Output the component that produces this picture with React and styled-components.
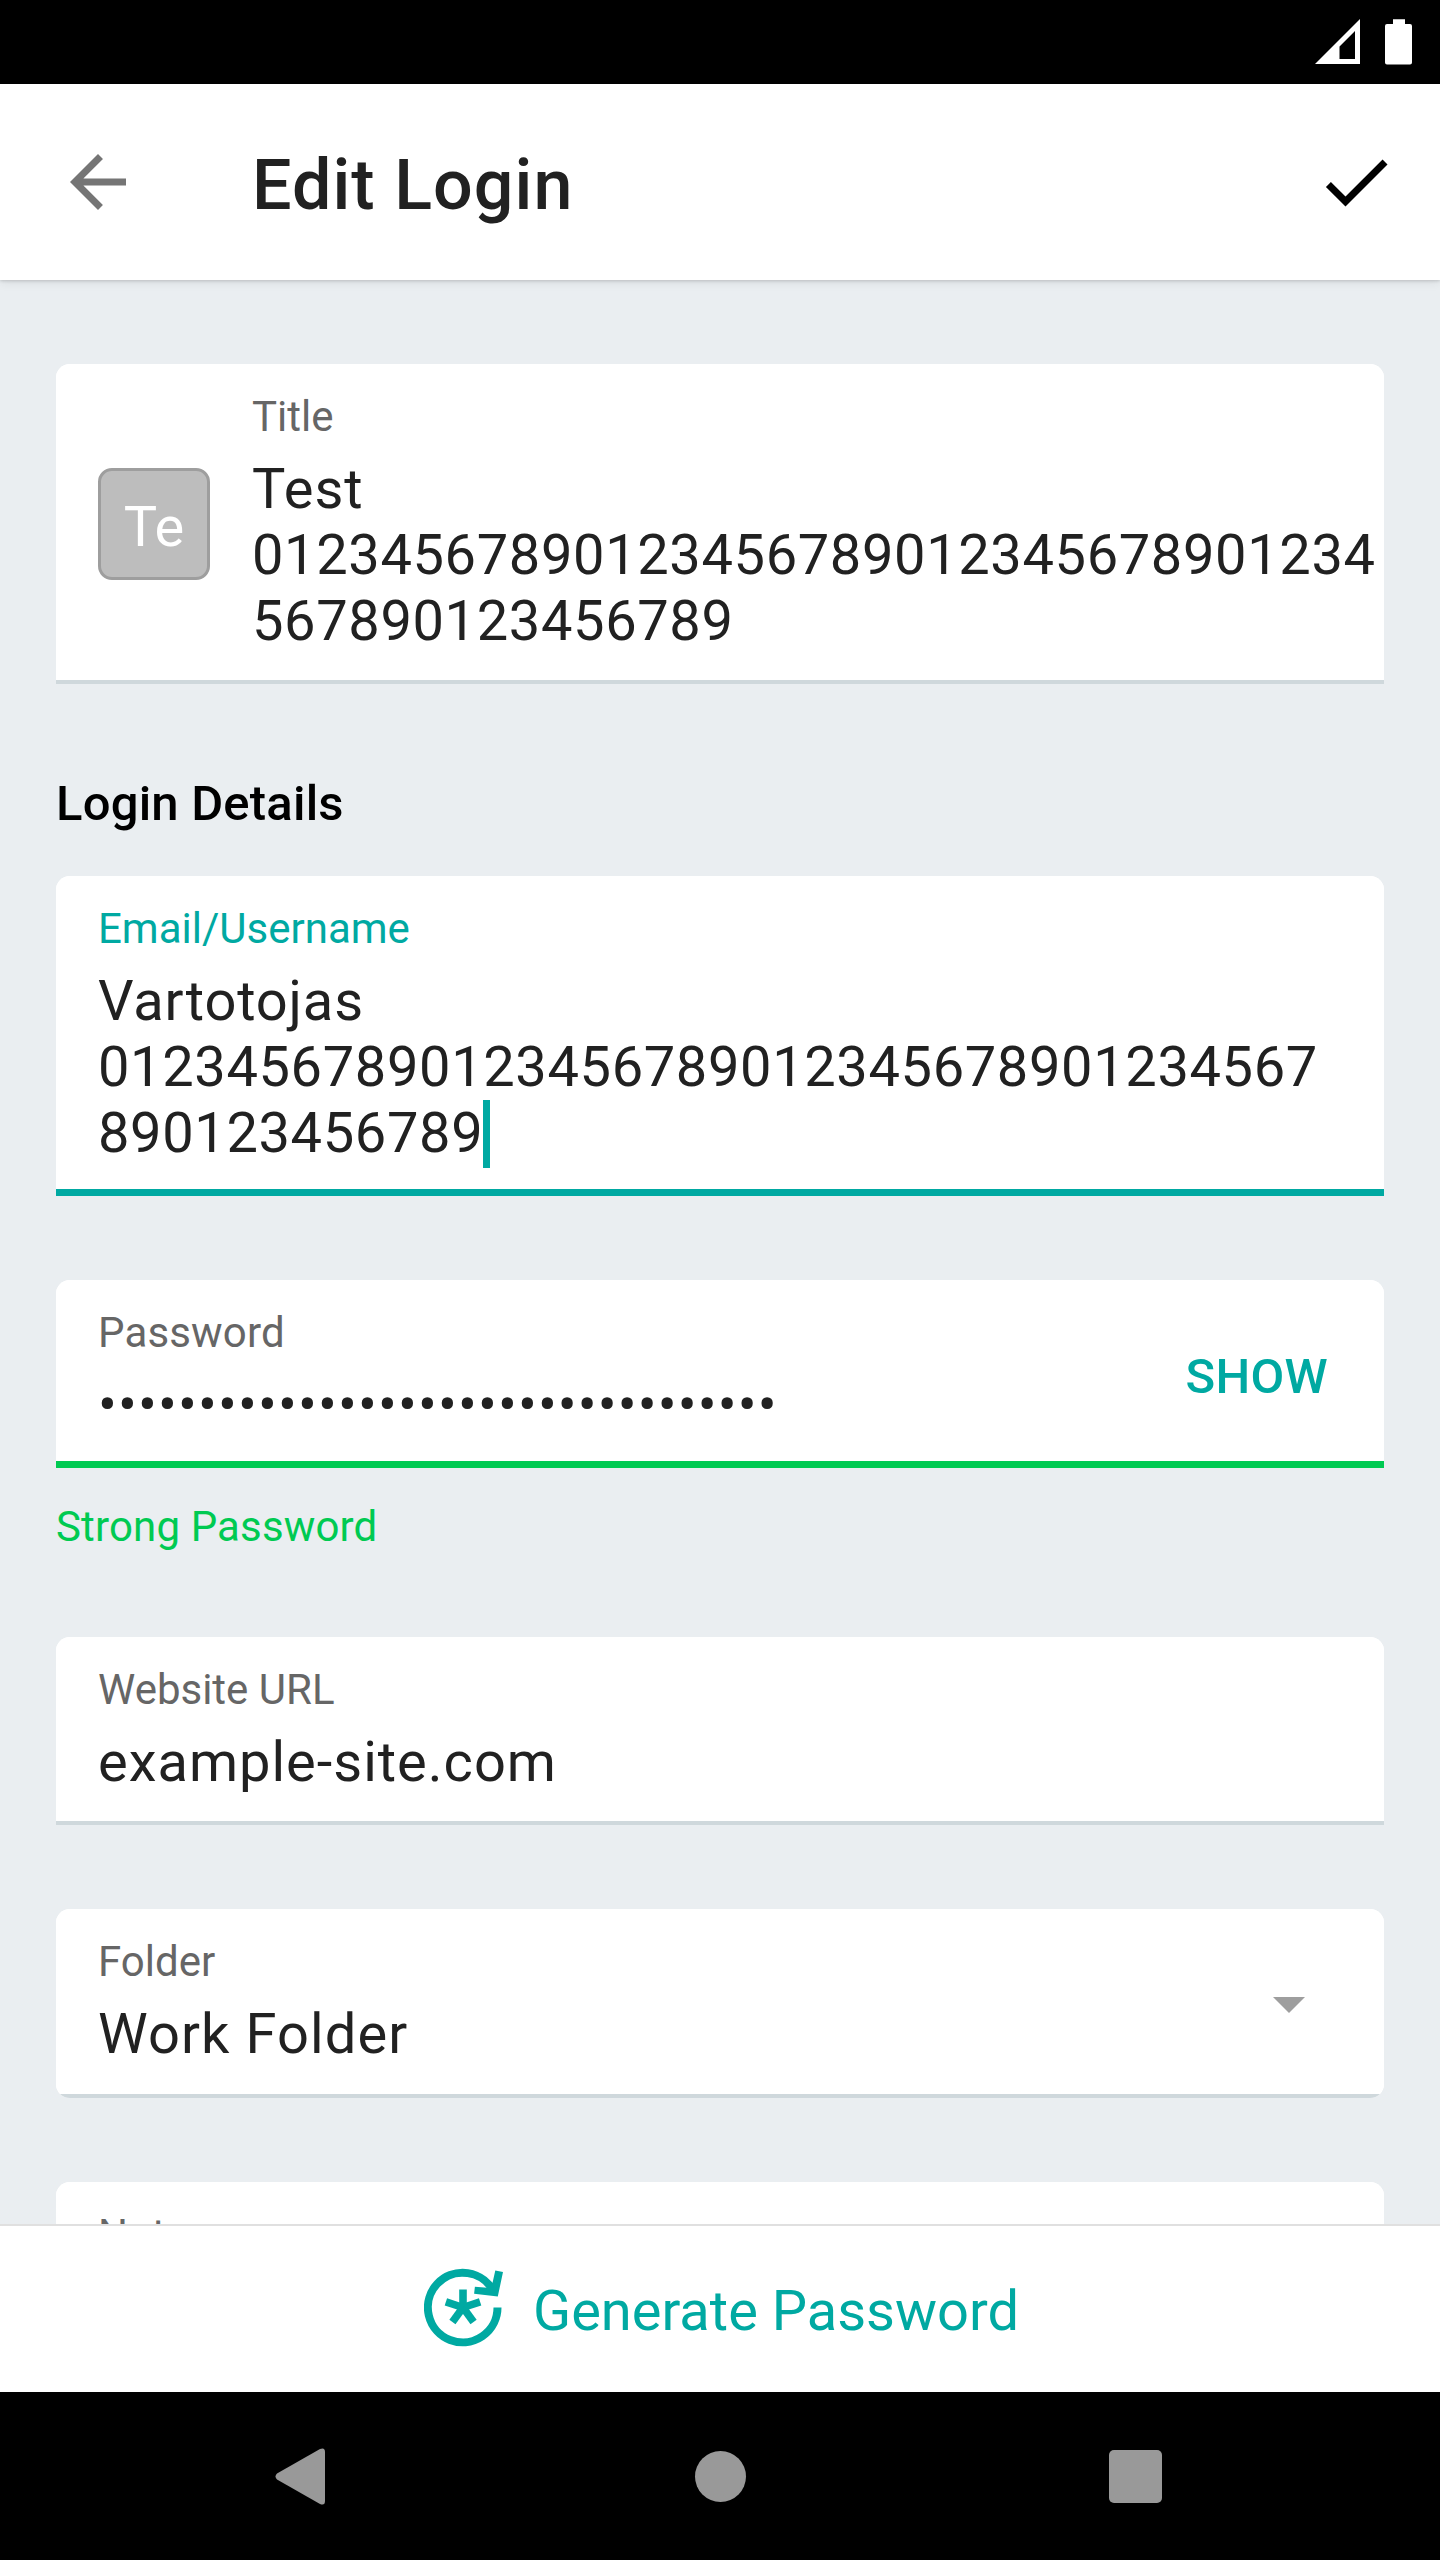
import React from "react";
import styled, { createGlobalStyle } from "styled-components";

const teal = "#00a9a2";
const green = "#00ca52";

const GlobalStyle = createGlobalStyle`
  *, *::before, *::after { box-sizing: border-box; }
  html, body { margin: 0; padding: 0; background: #000; }
  body { font-family: Roboto, "Liberation Sans", sans-serif; }
  svg { display: block; flex: none; }
`;

const Screen = styled.div`
  width: 1440px;
  height: 2560px;
  display: flex;
  flex-direction: column;
  overflow: hidden;
  background: #eaeef1;
`;

const StatusBar = styled.div`
  flex: none;
  height: 84px;
  padding: 19px 28px 0 0;
  display: flex;
  justify-content: flex-end;
  gap: 25px;
  background: #000;
`;

const AppBar = styled.header`
  flex: none;
  height: 196px;
  padding: 0 42px 0 56px;
  display: flex;
  align-items: center;
  background: #fff;
  box-shadow: 0 1px 3px rgba(0, 0, 0, 0.16), 0 3px 10px rgba(0, 0, 0, 0.07);
  z-index: 1;
`;

const ScreenTitle = styled.h1`
  flex: 1;
  margin: 6px 0 0 112px;
  font-size: 70px;
  line-height: 82px;
  font-weight: 500;
  letter-spacing: 1.05px;
  color: #212121;
`;

const Form = styled.main`
  flex: 1;
  min-height: 0;
  overflow: hidden;
  padding: 84px 56px 0;
  display: flex;
  flex-direction: column;
`;

const SectionTitle = styled.h2`
  flex: none;
  margin: 91px 0 43px;
  font-size: 49px;
  line-height: 58px;
  font-weight: 500;
  letter-spacing: 0.2px;
  color: #000;
`;

const Card = styled.section`
  flex: none;
  height: ${(p) => p.$height || 188}px;
  margin-top: ${(p) => p.$gap || 0}px;
  display: flex;
  flex-direction: column;
  background: #fff;
  border-radius: ${(p) => (p.$clipped ? "14px" : "14px 14px 0 0")};
  overflow: hidden;
`;

const CardBody = styled.div`
  flex: 1;
  min-height: 0;
  display: flex;
  padding-left: 42px;
  background: #fff;
`;

const Underline = styled.div`
  flex: none;
  height: ${(p) => p.$size || 4}px;
  background: ${(p) => p.$color || "#cfd8dc"};
`;

const FieldText = styled.div`
  flex: 1;
  padding-top: 28px;
`;

const Label = styled.div`
  font-size: 42px;
  line-height: 49px;
  letter-spacing: ${(p) => p.$spacing || 0}px;
  color: ${(p) => p.$color || "#666"};
`;

const Value = styled.div`
  margin-top: 15px;
  font-size: 56px;
  line-height: 66px;
  letter-spacing: ${(p) => p.$spacing || 1}px;
  white-space: pre;
  color: #212121;
`;

const Digits = styled.span`
  letter-spacing: 0.63px;
`;

const Caret = styled.span`
  display: inline-block;
  width: 7px;
  height: 68px;
  margin: 0 0 -2px 0;
  vertical-align: top;
  background: ${teal};
`;

const Avatar = styled.div`
  width: 112px;
  height: 112px;
  margin: 104px 42px 0 0;
  display: flex;
  align-items: center;
  justify-content: center;
  padding-top: 6px;
  border: 3px solid #9e9e9e;
  border-radius: 14px;
  background: #bdbdbd;
  color: #fff;
  font-size: 56px;
  line-height: 66px;
`;

const ShowButton = styled.button`
  align-self: flex-start;
  margin: 68px 56px 0 0;
  padding: 0;
  border: 0;
  background: none;
  font: 500 49px/58px Roboto, "Liberation Sans", sans-serif;
  letter-spacing: 0.3px;
  color: ${teal};
`;

const DropdownIcon = styled.svg`
  margin: 88px 79px 0 0;
`;

const Strength = styled.div`
  flex: none;
  margin-top: 34px;
  font-size: 42px;
  line-height: 49px;
  letter-spacing: 0.15px;
  color: ${green};
`;

const Footer = styled.footer`
  flex: none;
  height: 168px;
  padding-left: 424px;
  display: flex;
  align-items: center;
  gap: 28px;
  border-top: 2px solid #e0e0e0;
  background: #fff;

  svg {
    margin-bottom: 1px;
  }
`;

const GenerateText = styled.span`
  padding-top: 4px;
  font-size: 56px;
  line-height: 66px;
  color: ${teal};
`;

const NavBar = styled.nav`
  flex: none;
  height: 168px;
  padding: 0 278px 0 275px;
  display: flex;
  align-items: center;
  justify-content: space-between;
  background: #000;
`;

const HomeDot = styled.div`
  width: 51px;
  height: 51px;
  margin-left: 5px;
  border-radius: 50%;
  background: #999;
`;

const RecentsSquare = styled.div`
  width: 53px;
  height: 53px;
  border-radius: 5px;
  background: #999;
`;

const SignalIcon = () => (
  <svg width="45" height="45" viewBox="0 0 45 45">
    <path fill="#fff" fillRule="evenodd" d="M45 0V45H0ZM40 12L24.500 27.500V40H40Z" />
  </svg>
);

const BatteryIcon = () => (
  <svg width="27" height="46" viewBox="0 0 27 46">
    <path fill="#fff" d="M8 0.300H20V5H25Q27 5 27 7V43.500Q27 45.500 25 45.500H2Q0 45.500 0 43.500V7Q0 5 2 5H8Z" />
  </svg>
);

const BackIcon = () => (
  <svg width="84" height="84" viewBox="0 0 24 24" fill="#757575">
    <path d="M20 11H7.830l5.590-5.590L12 4l-8 8 8 8 1.410-1.410L7.830 13H20v-2z" />
  </svg>
);

const CheckIcon = () => (
  <svg width="84" height="84" viewBox="0 0 24 24" fill="#000">
    <path d="M9 16.170L4.830 12l-1.420 1.410L9 19 21 7l-1.410-1.410z" />
  </svg>
);

const GenerateIcon = () => (
  <svg width="81" height="81" viewBox="0 0 81 81">
    <g fill="none" stroke={teal}>
      <path strokeWidth="8" d="M73.500 39.500A34.800 34.800 0 1 1 70 24.300" />
      <g strokeWidth="7.600">
        {[0, 72, 144, 216, 288].map((a) => (
          <path key={a} d="M39 39.500V21.500" transform={`rotate(${a} 39 39.500)`} />
        ))}
      </g>
    </g>
    <path fill={teal} d="M71.300 2.500L79 4.100L73.800 28.500L50.100 25.800L50.900 18.800L63.500 19.700L68.600 14.500Z" />
  </svg>
);

const Field = ({ label, labelColor, labelSpacing, children }) => (
  <FieldText>
    <Label $color={labelColor} $spacing={labelSpacing}>{label}</Label>
    {children}
  </FieldText>
);

export default function App() {
  return (
    <>
      <GlobalStyle />
      <Screen>
        <StatusBar>
          <SignalIcon />
          <BatteryIcon />
        </StatusBar>

        <AppBar>
          <BackIcon />
          <ScreenTitle>Edit Login</ScreenTitle>
          <CheckIcon />
        </AppBar>

        <Form>
          <Card $height={320}>
            <CardBody>
              <Avatar>Te</Avatar>
              <Field label="Title">
                <Value>
                  {"Test\n"}
                  <Digits>{"01234567890123456789012345678901234\n567890123456789"}</Digits>
                </Value>
              </Field>
            </CardBody>
            <Underline />
          </Card>

          <SectionTitle>Login Details</SectionTitle>

          <Card $height={320}>
            <CardBody>
              <Field label="Email/Username" labelColor={teal}>
                <Value $spacing={0.85}>
                  {"Vartotojas\n"}
                  <Digits>{"01234567890123456789012345678901234567\n890123456789"}</Digits>
                  <Caret />
                </Value>
              </Field>
            </CardBody>
            <Underline $size={7} $color={teal} />
          </Card>

          <Card $gap={84}>
            <CardBody>
              <Field label="Password" labelSpacing={0.15}>
                <Value $spacing={1.1}>{"•".repeat(34)}</Value>
              </Field>
              <ShowButton>SHOW</ShowButton>
            </CardBody>
            <Underline $size={7} $color={green} />
          </Card>
          <Strength>Strong Password</Strength>

          <Card $gap={86}>
            <CardBody>
              <Field label="Website URL">
                <Value>example-site.com</Value>
              </Field>
            </CardBody>
            <Underline />
          </Card>

          <Card $gap={84} $height={189} $clipped>
            <CardBody>
              <Field label="Folder">
                <Value $spacing={1.1}>Work Folder</Value>
              </Field>
              <DropdownIcon width="32" height="16" viewBox="0 0 32 16">
                <path fill="#9e9e9e" d="M0 0H32L16 16Z" />
              </DropdownIcon>
            </CardBody>
            <Underline />
          </Card>

          <Card $gap={84}>
            <CardBody>
              <Field label="Notes" />
            </CardBody>
            <Underline />
          </Card>
        </Form>

        <Footer>
          <GenerateIcon />
          <GenerateText>Generate Password</GenerateText>
        </Footer>

        <NavBar>
          <svg width="51" height="57" viewBox="0 0 51 57">
            <path fill="#999" d="M2 25.500L45 1Q50 -1 50 4V53Q50 58 45 56L2 31.500Q-1 28.500 2 25.500Z" />
          </svg>
          <HomeDot />
          <RecentsSquare />
        </NavBar>
      </Screen>
    </>
  );
}
